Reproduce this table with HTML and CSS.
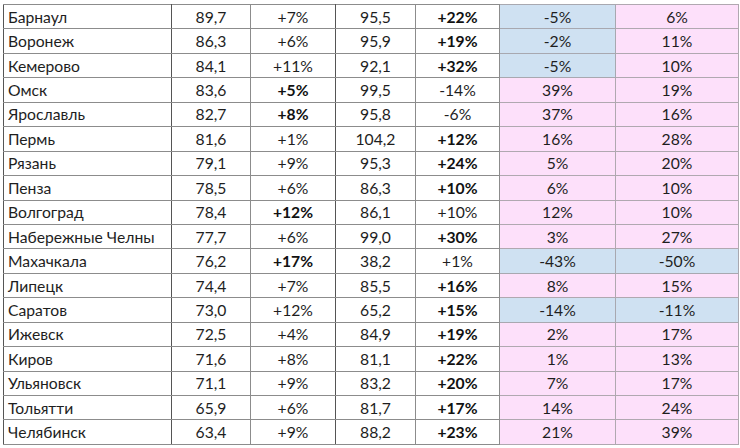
FILE: index.html
```html
<!DOCTYPE html>
<html lang="ru">
<head>
<meta charset="utf-8">
<link rel="stylesheet" href="styles.css">
</head>
<body>
<table class="grid">
<colgroup>
<col class="c1"><col class="c2"><col class="c3"><col class="c4"><col class="c5"><col class="c6"><col class="c7">
</colgroup>
<tbody>
<tr><td class="city">Барнаул</td><td>89,7</td><td>+7%</td><td>95,5</td><td class="b">+22%</td><td class="blue">-5%</td><td class="pink">6%</td></tr>
<tr><td class="city">Воронеж</td><td>86,3</td><td>+6%</td><td>95,9</td><td class="b">+19%</td><td class="blue">-2%</td><td class="pink">11%</td></tr>
<tr><td class="city">Кемерово</td><td>84,1</td><td>+11%</td><td>92,1</td><td class="b">+32%</td><td class="blue">-5%</td><td class="pink">10%</td></tr>
<tr><td class="city">Омск</td><td>83,6</td><td class="b">+5%</td><td>99,5</td><td>-14%</td><td class="pink">39%</td><td class="pink">19%</td></tr>
<tr><td class="city">Ярославль</td><td>82,7</td><td class="b">+8%</td><td>95,8</td><td>-6%</td><td class="pink">37%</td><td class="pink">16%</td></tr>
<tr><td class="city">Пермь</td><td>81,6</td><td>+1%</td><td>104,2</td><td class="b">+12%</td><td class="pink">16%</td><td class="pink">28%</td></tr>
<tr><td class="city">Рязань</td><td>79,1</td><td>+9%</td><td>95,3</td><td class="b">+24%</td><td class="pink">5%</td><td class="pink">20%</td></tr>
<tr><td class="city">Пенза</td><td>78,5</td><td>+6%</td><td>86,3</td><td class="b">+10%</td><td class="pink">6%</td><td class="pink">10%</td></tr>
<tr><td class="city">Волгоград</td><td>78,4</td><td class="b">+12%</td><td>86,1</td><td>+10%</td><td class="pink">12%</td><td class="pink">10%</td></tr>
<tr><td class="city">Набережные Челны</td><td>77,7</td><td>+6%</td><td>99,0</td><td class="b">+30%</td><td class="pink">3%</td><td class="pink">27%</td></tr>
<tr><td class="city">Махачкала</td><td>76,2</td><td class="b">+17%</td><td>38,2</td><td>+1%</td><td class="blue">-43%</td><td class="blue">-50%</td></tr>
<tr><td class="city">Липецк</td><td>74,4</td><td>+7%</td><td>85,5</td><td class="b">+16%</td><td class="pink">8%</td><td class="pink">15%</td></tr>
<tr><td class="city">Саратов</td><td>73,0</td><td>+12%</td><td>65,2</td><td class="b">+15%</td><td class="blue">-14%</td><td class="blue">-11%</td></tr>
<tr><td class="city">Ижевск</td><td>72,5</td><td>+4%</td><td>84,9</td><td class="b">+19%</td><td class="pink">2%</td><td class="pink">17%</td></tr>
<tr><td class="city">Киров</td><td>71,6</td><td>+8%</td><td>81,1</td><td class="b">+22%</td><td class="pink">1%</td><td class="pink">13%</td></tr>
<tr><td class="city">Ульяновск</td><td>71,1</td><td>+9%</td><td>83,2</td><td class="b">+20%</td><td class="pink">7%</td><td class="pink">17%</td></tr>
<tr><td class="city">Тольятти</td><td>65,9</td><td>+6%</td><td>81,7</td><td class="b">+17%</td><td class="pink">14%</td><td class="pink">24%</td></tr>
<tr><td class="city">Челябинск</td><td>63,4</td><td>+9%</td><td>88,2</td><td class="b">+23%</td><td class="pink">21%</td><td class="pink">39%</td></tr>
</tbody>
</table>
</body>
</html>
```
FILE: styles.css
```css
html, body {
  margin: 0;
  padding: 0;
  background: #ffffff;
}
body {
  padding: 4px 0 0 3px;
  font-family: Lato, "Liberation Sans", sans-serif;
  font-size: 15.7px;
  color: #1e1e1e;
}
.grid {
  border-collapse: collapse;
  table-layout: fixed;
  width: 735px;
}
.c1 { width: 168px; }
.c2 { width: 79px; }
.c3 { width: 85px; }
.c4 { width: 80px; }
.c5 { width: 84px; }
.c6 { width: 116px; }
.c7 { width: 123px; }
.grid tr {
  height: 24.45px;
}
.grid td {
  border: 1px solid #8c8c8c;
  text-align: center;
  padding: 0;
  line-height: 22px;
  white-space: nowrap;
}
.grid td.city {
  text-align: left;
  padding-left: 4px;
  border-left: 1px solid #555555;
  border-right: 1px solid #555555;
}
.grid td:nth-child(3) {
  border-right: 1px solid #555555;
}
.grid td.b {
  font-weight: 700;
  color: #111111;
}
.grid td.blue {
  background: #cfe1f2;
  border-color: #a8a8b0;
}
.grid td.pink {
  background: #fde0fa;
  border-color: #b0a8b0;
}
```
